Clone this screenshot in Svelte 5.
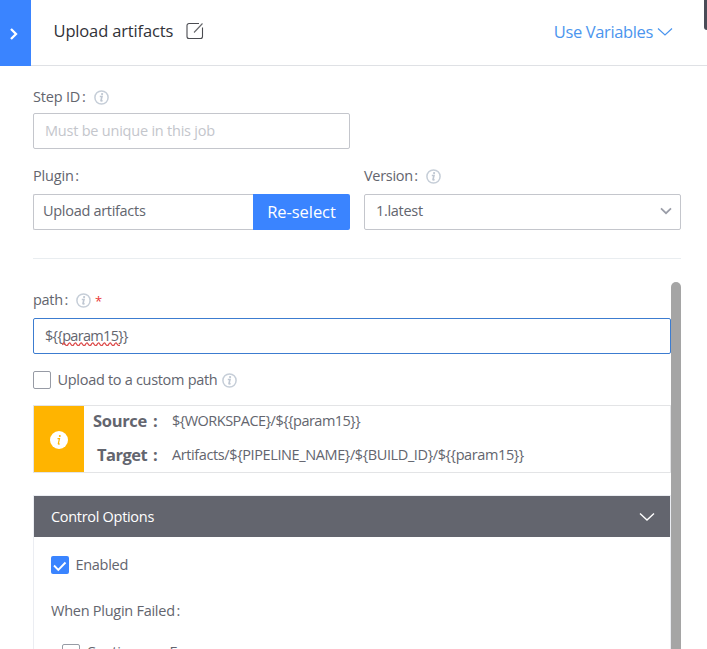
<script>
  let stepId = $state('');
</script>

{#snippet info()}
  <svg class="info" viewBox="0 0 15 15" width="15" height="15" aria-hidden="true">
    <circle cx="7.5" cy="7.5" r="6.600" fill="none" stroke="#c6ced8" stroke-width="1.500" />
    <path d="M5.800 6.500h2.200L7 10.400q-.2.9 1.600.2" fill="none" stroke="#bfc7d2" stroke-width="1.600" />
    <circle cx="8.1" cy="4.1" r="1.100" fill="#bfc7d2" />
  </svg>
{/snippet}

<div class="page">
  <header>
    <button class="fold" aria-label="Collapse">
      <svg width="10" height="14" viewBox="0 0 10 14"><path d="M2 2l5 5-5 5" fill="none" stroke="#fff" stroke-width="2.3" /></svg>
    </button>
    <div class="bar">
      <h1>Upload artifacts</h1>
      <svg class="edit" width="18" height="18" viewBox="0 0 18 18">
        <path d="M13 1.500H3a2 2 0 0 0-2 2V14.500a2 2 0 0 0 2 2H14.500a2 2 0 0 0 2-2V5.500" fill="none" stroke="#4a4b50" stroke-width="1.100" />
        <path d="M8 10.500L16.500 1.500" fill="none" stroke="#66676b" stroke-width="1.100" />
      </svg>
      <span class="vars">Use Variables</span>
      <svg class="varrow" width="16" height="10" viewBox="0 0 16 10"><path d="M1 1.500l7 6.500 7-6.500" fill="none" stroke="#4b95ee" stroke-width="1.2" /></svg>
    </div>
    <i class="edge"></i>
  </header>

  <section class="basic">
    <div class="label step"><span>Step ID<span class="colon">:</span></span>{@render info()}</div>
    <div class="box half"><input bind:value={stepId} placeholder="Must be unique in this job" /></div>
    <div class="cols">
      <div class="col">
        <div class="label plugin"><span>Plugin<span class="colon">:</span></span></div>
        <div class="group">
          <div class="box plug"><span>Upload artifacts</span></div>
          <button class="reselect"><span>Re-select</span></button>
        </div>
      </div>
      <div class="col">
        <div class="label version"><span>Version<span class="colon">:</span></span>{@render info()}</div>
        <div class="box select">
          <span>1.latest</span>
          <svg width="12" height="8" viewBox="0 0 12 8"><path d="M1 1.300l5 4.900 5-4.900" fill="none" stroke="#9a9da8" stroke-width="1.700" /></svg>
        </div>
      </div>
    </div>
  </section>

  <div class="scroll">
    <div class="content">
      <div class="label path"><span>path<span class="colon">:</span></span>{@render info()}<b class="req">*</b></div>
      <div class="box focus"><span class="param">$&#123;&#123;<span class="word">param15<svg class="wave" width="58" height="4" viewBox="0 0 58 4"><path d={'M0 3' + Array.from({ length: 10 }, () => 'q1.450-3.500 2.900-1t2.900 1').join('')} fill="none" stroke="#dc4a4a" stroke-width="1.300" /></svg></span>&#125;&#125;</span></div>
      <div class="check custom">
        <i class="cb"></i><span>Upload to a custom path</span>{@render info()}
      </div>
      <div class="notice">
        <div class="flag">
          <svg width="18" height="18" viewBox="0 0 18 18">
            <circle cx="9" cy="9" r="9" fill="#fff" />
            <path d="M7.500 7.600h2L8.300 12.600q-.1 1 1.500.2" fill="none" stroke="#ffb400" stroke-width="1.200" />
            <circle cx="9.800" cy="5" r="1" fill="#ffb400" />
          </svg>
        </div>
        <div class="rows">
          <div class="row"><strong><span>Source</span><em>:</em></strong><span class="source">{'${WORKSPACE}/${{param15}}'}</span></div>
          <div class="row"><strong><span class="tight">Target</span><em>:</em></strong><span class="target">{'Artifacts/${PIPELINE_NAME}/${BUILD_ID}/${{param15}}'}</span></div>
        </div>
      </div>
      <div class="panel">
        <div class="head">
          <span>Control Options</span>
          <svg width="16" height="10" viewBox="0 0 16 10"><path d="M1 1.500l7 6.500 7-6.500" fill="none" stroke="#fff" stroke-width="1.400" /></svg>
        </div>
        <div class="check enabled">
          <i class="cb on"><svg width="18" height="18" viewBox="0 0 18 18"><path d="M3 9.500l4.300 4.300 7.200-7.300" fill="none" stroke="#fff" stroke-width="1.900" /></svg></i>
          <span>Enabled</span>
        </div>
        <div class="when">When Plugin Failed<span class="colon">:</span></div>
        <div class="check cont"><i class="cb"></i><span>Continue on Error</span></div>
      </div>
    </div>
    <div class="thumb"></div>
  </div>
</div>

<style>
  :global(body) { background: #fff; overflow: hidden; }
  .page, .page * { box-sizing: border-box; }
  .page {
    width: 707px; height: 649px; overflow: hidden; display: flex; flex-direction: column;
    font-family: "Open Sans", "Noto Sans", sans-serif; font-size: 14.5px; line-height: 20px; color: #63656e; white-space: nowrap;
    letter-spacing: -0.3px;
  }
  button { border: 0; padding: 0; font: inherit; letter-spacing: inherit; color: #fff; background: #3a84ff; }
  svg { display: block; flex: none; }
  header { height: 66px; display: flex; flex: none; position: relative; }
  .fold { width: 31px; height: 66px; display: flex; align-items: center; justify-content: center; padding: 2px 3px 0 0; }
  .bar { flex: 1; display: flex; align-items: center; padding: 0 34px 3px 22.500px; border-bottom: 1px solid #dfe1e5; }
  h1 { margin: 0; font-size: 16.5px; font-weight: 400; color: #313238; width: 119.500px; letter-spacing: -0.150px; }
  .edit { margin-left: 13px; }
  .vars { margin: 2px 0 0 auto; font-size: 16.5px; color: #4b95ee; letter-spacing: -0.360px; }
  .varrow { margin: 2px 0 0 4px; }
  .edge { position: absolute; right: 0; top: 0; width: 3px; height: 30px; background: #4a4c57; border-radius: 0 0 0 3px; }
  .basic { height: 193px; flex: none; margin: 0 26px 0 33px; padding-top: 21px; border-bottom: 1px solid #e9edf0; }
  .label { display: flex; align-items: center; height: 20px; }
  .label .info { margin: 1px 0 0 8px; }
  .step, .plugin { letter-spacing: -0.180px; }
  .colon { margin-left: 1.700px; }
  .version .colon { margin-left: 1.500px; }
  .box { border: 1px solid #c4c6cc; border-radius: 2px; height: 36px; display: flex; align-items: center; background: #fff; }
  .half { width: 317px; margin-top: 6px; padding-left: 11px; }
  input { border: 0; outline: 0; padding: 0; width: 280px; font: inherit; letter-spacing: -0.220px; background: none; }
  input::placeholder { color: #c4c6cc; opacity: 1; }
  .cols { display: flex; gap: 14px; margin-top: 17px; }
  .col { width: 317px; }
  .group { display: flex; margin-top: 8px; }
  .plug { width: 220px; border-right: 0; border-radius: 2px 0 0 2px; padding: 0 0 2px 9px; }
  .reselect { width: 97px; height: 36px; border-radius: 0 2px 2px 0; font-size: 16.5px; font-weight: 500; letter-spacing: -0.060px; }
  .select { margin-top: 8px; padding: 0 8.500px 2px 11px; justify-content: space-between; }
  .scroll { flex: 1; display: flex; margin: 23px 26px 0 33px; min-height: 0; }
  .content { width: 638px; flex: none; padding-top: 8px; }
  .thumb { width: 10px; background: #a5a5a5; border-radius: 5px 5px 0 0; }
  .req { color: #ea3636; font-weight: 400; font-size: 13px; margin: 2px 0 0 4px; }
  .focus { margin-top: 8px; border-color: #3c7cd0; padding-left: 11px; }
  .param { letter-spacing: -0.680px; }
  .word { position: relative; }
  .wave { position: absolute; left: 0; bottom: -1px; }
  .check { display: flex; align-items: center; }
  .custom { margin-top: 16px; height: 20px; }
  .cb { width: 18px; height: 18px; border: 1px solid #979ba5; border-radius: 2px; flex: none; margin-right: 6.500px; }
  .cb.on { border: 0; background: #3a84ff; }
  .custom .info { margin-left: 5px; }
  .notice { margin-top: 15px; height: 68px; border: 1px solid #e3e4e6; display: flex; }
  .flag { width: 50px; background: #ffb400; display: flex; align-items: center; justify-content: center; padding-top: 2px; }
  .row { display: flex; align-items: center; height: 38px; }
  .row:first-child { height: 30px; }
  .rows { height: 66px; }
  .row strong { width: 75px; display: flex; justify-content: flex-end; font-size: 16.5px; font-weight: 700; margin-right: 13px; }
  .row em { font-style: normal; width: 6px; margin-left: 6px; }
  .tight { letter-spacing: -0.550px; }
  .source { letter-spacing: -0.510px; }
  .target { letter-spacing: -0.390px; }
  .panel { margin-top: 22px; border: 1px solid #ebedf2; border-bottom: 0; }
  .head { height: 41px; background: #63656e; color: #fff; display: flex; align-items: center; justify-content: space-between; padding: 0 15px 0 17px; }
  .enabled { margin: 18px 0 0 17px; height: 20px; }
  .when { margin: 26px 0 0 17px; letter-spacing: -0.260px; }
  .cont { margin: 22px 0 0 28px; height: 20px; align-items: flex-start; padding-top: 1px; }
  .cont span { line-height: 16px; }
</style>
